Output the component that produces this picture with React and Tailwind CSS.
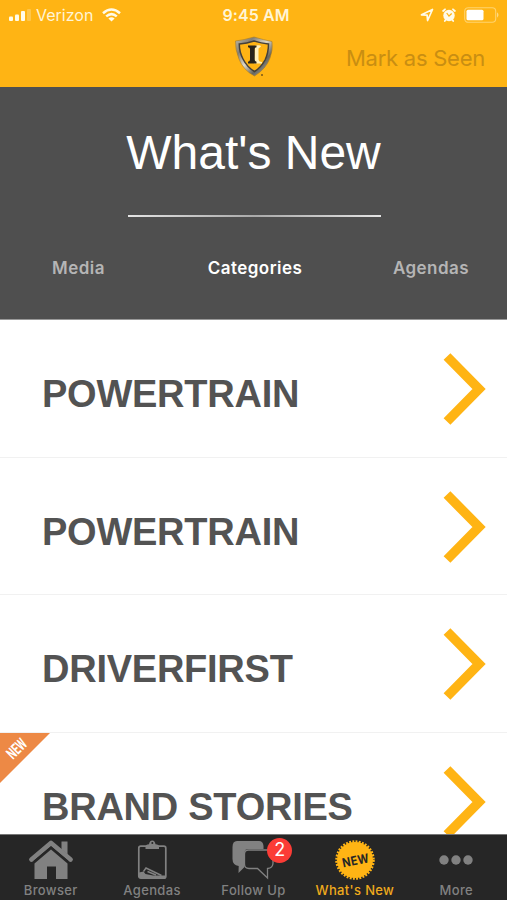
import React from "react";

const categories = [
  { title: "POWERTRAIN" },
  { title: "POWERTRAIN" },
  { title: "DRIVERFIRST" },
  { title: "BRAND STORIES", isNew: true },
];

function StatusBar() {
  return (
    <div className="grid h-[30px] grid-cols-3 items-center text-[#fff5d6]">
      <div className="flex items-center pl-[9px]">
        <svg width="23" height="14" viewBox="0 0 23 14" fill="#fffbe9">
          <rect x="0" y="8.5" width="4" height="4.5" rx="1" />
          <rect x="6" y="6.5" width="4" height="6.5" rx="1" />
          <rect x="12" y="3" width="4" height="10" rx="1" />
          <rect x="18" y="1" width="4" height="12" rx="1" opacity="0.25" />
        </svg>
        <span className="ml-[4px] text-[16px] leading-[20px]">Verizon</span>
        <svg className="ml-[9px]" width="19" height="14" viewBox="0 0 19 14" fill="none" stroke="#fffbe9" strokeWidth="2.5">
          <path d="M1 5.2Q9.500-2.2 18 5.200" />
          <path d="M4.200 8.400Q9.500 3.800 14.800 8.400" />
          <path d="M9.500 13.500L6.400 10.400Q9.500 8 12.600 10.400Z" fill="#fffbe9" stroke="none" />
        </svg>
      </div>
      <div className="pl-[5px] text-center text-[16px] font-semibold leading-[20px] tracking-[0.1px]">9:45 AM</div>
      <div className="flex items-center justify-end pr-[7px]">
        <svg width="14" height="14" viewBox="0 0 14 14" fill="none" stroke="#fffbe9" strokeWidth="1.7" strokeLinejoin="round">
          <path d="M1.500 6.800L12.500 1.500L7.600 12.500L7.100 7.200Z" />
        </svg>
        <svg className="ml-[8px]" width="14" height="14" viewBox="0 0 14 14">
          <circle cx="7" cy="7.500" r="5.700" fill="#fffbe9" />
          <path d="M1.100 3L3 1.300M11 1.300L12.900 3M3.500 12L2.800 13M10.500 12L11.200 13" stroke="#fffbe9" strokeWidth="1.800" strokeLinecap="round" />
          <path d="M4.700 5L7 8L9.700 5.500" fill="none" stroke="#ffb414" strokeWidth="1.200" />
        </svg>
        <svg className="ml-[8px]" width="36" height="16" viewBox="0 0 36 16">
          <rect x=".7" y=".7" width="31" height="14.600" rx="3.500" fill="none" stroke="#ffd36e" strokeWidth="1.100" />
          <rect x="2.500" y="2.700" width="17" height="10.600" rx="1.500" fill="#fff" />
          <path d="M33 5.300Q36 8 33 10.700Z" fill="#ffd982" />
        </svg>
      </div>
    </div>
  );
}

function Shield() {
  return (
    <svg width="40" height="42" viewBox="0 0 40 42">
      <defs>
        <linearGradient id="steel" x1="0" y1="0" x2="1" y2="1">
          <stop stopColor="#c5bda6" />
          <stop offset=".25" stopColor="#827f78" />
          <stop offset=".48" stopColor="#ded8c8" />
          <stop offset=".7" stopColor="#68665f" />
          <stop offset="1" stopColor="#c4c4bd" />
        </linearGradient>
      </defs>
      <path d="M1.500 5Q10 4 20 1Q30 4 38 5.500Q39.200 14 36 22Q32 33 20.500 40Q9 34 5 23Q1 13 1.500 5Z" fill="url(#steel)" stroke="#a57b28" strokeWidth=".6" />
      <path d="M5.300 8Q13 7.300 20 5Q27 7.300 34.500 8Q34.500 17 31 24Q27 31.500 20.500 35.500Q13 31 9 23Q5.300 16 5.300 8Z" fill="#ffb414" stroke="#454039" strokeWidth="1.500" />
      <path d="M21 9.500Q27 8.500 27 10.500L24.500 12.500V23.500Q25 26 28 26V27.500H20Z" fill="#fff0bd" />
      <path d="M14 9.500H22.500V11.200Q20.700 11.500 20.700 13V23.500Q20.700 25.500 22.500 25.800V27.500H14V25.800Q16 25.500 16 23.500V13Q16 11.500 14 11.200Z" fill="#28231b" />
      <circle cx="28" cy="39" r="1" fill="#785719" />
    </svg>
  );
}

function Row({ title, isNew }) {
  return (
    <div className="relative flex h-[137.5px] shrink-0 items-center justify-between border-b border-[#f1f1f1] pl-[42px] pr-[21px]">
      {isNew && (
        <div className="absolute left-0 top-0 h-[50px] w-[50px]">
          <svg width="50" height="50" viewBox="0 0 50 50">
            <path d="M0 0H50L0 50Z" fill="#ed8945" />
          </svg>
          <span className="absolute left-[1px] top-[6px] flex h-[20px] w-[32px] -rotate-45 scale-x-[0.62] items-center justify-center font-['Roboto'] text-[16px] font-bold leading-[20px] text-white">NEW</span>
        </div>
      )}
      <span className="pt-[12px] font-['Liberation_Sans',sans-serif] text-[38px] font-bold leading-[44px] tracking-[-0.25px] text-[#535353]">{title}</span>
      <svg className="mt-[1.5px]" width="43" height="72" viewBox="0 0 43 72" fill="none" stroke="#ffb414" strokeWidth="9.500">
        <path d="M4 3.500L36 36L4 68.500" />
      </svg>
    </div>
  );
}

function HomeIcon() {
  return (
    <svg width="46" height="42" viewBox="0 0 46 42" fill="#818181">
      <path d="M33.500 2.500H39.500V15.500L33.500 10.400Z" />
      <path d="M3.500 20.500L23 4L42.500 20.500" fill="none" stroke="#818181" strokeWidth="4.800" strokeLinecap="round" strokeLinejoin="round" />
      <path d="M23 10.500L39.500 24.500V40H28V27.500H19V40H6.500V24.500Z" />
      <path d="M6 22.300L23 8L40 22.300" fill="none" stroke="#262626" strokeWidth="1.200" />
    </svg>
  );
}

function ClipboardIcon() {
  return (
    <svg width="32" height="42" viewBox="0 0 32 42">
      <rect x="2.800" y="7.200" width="27" height="32" rx="2" fill="none" stroke="#818181" strokeWidth="1.700" />
      <path d="M9.500 8Q9.500 5.500 13 5.300Q13.500 1.500 16.300 1.500Q19 1.500 19.500 5.300Q23 5.500 23 8V10H9.500Z" fill="#818181" />
      <circle cx="16.300" cy="4" r="1" fill="#262626" />
      <path d="M3 33.500L7.500 32.500L9.500 35L17 36.500H29V39H3Z" fill="#818181" />
      <path d="M7.500 32.500L10 29L25.500 36.500M11.500 32.500L20 36" fill="none" stroke="#818181" strokeWidth="1.400" />
    </svg>
  );
}

function ChatIcon() {
  return (
    <svg width="44" height="42" viewBox="0 0 44 42">
      <path d="M6 2H28Q32 2 32.500 7V10H17Q13.500 10 13.500 14V28L7.500 34L7.700 27Q1.500 26 1.500 20V8Q1.500 2 6 2Z" fill="#818181" />
      <path d="M17.500 11H39Q42 11 42 15V24Q42 29 36.500 29.500V39L26.500 29.500H18Q13.500 29.500 13.500 25V15Q13.500 11 17.500 11Z" fill="#262626" stroke="#818181" strokeWidth="1.300" />
    </svg>
  );
}

function NewIcon() {
  return (
    <svg width="42" height="42" viewBox="0 0 42 42">
      <circle cx="21" cy="21" r="18" fill="#ffb414" />
      <circle cx="21" cy="21" r="18.500" fill="none" stroke="#ffb414" strokeWidth="2.500" strokeDasharray="1.900 1.329" />
      <text x="21.500" y="26" transform="rotate(-12 21 21)" textAnchor="middle" textLength="27" lengthAdjust="spacingAndGlyphs" className="fill-[#262626] text-[12.5px] font-bold">NEW</text>
    </svg>
  );
}

function MoreIcon() {
  return (
    <svg width="34" height="42" viewBox="0 0 34 42" fill="#818181">
      <circle cx="5" cy="21" r="4.700" />
      <circle cx="17" cy="21" r="4.700" />
      <circle cx="29" cy="21" r="4.700" />
    </svg>
  );
}

const navigation = [
  { name: "Browser", icon: <HomeIcon /> },
  { name: "Agendas", icon: <ClipboardIcon /> },
  { name: "Follow Up", icon: <ChatIcon />, count: 2 },
  { name: "What's New", icon: <NewIcon />, active: true },
  { name: "More", icon: <MoreIcon /> },
];

export default function App() {
  return (
    <div className="flex h-[900px] w-[507px] flex-col overflow-hidden bg-white font-['Inter','Liberation_Sans',sans-serif]">
      <header className="h-[87px] shrink-0 bg-[#ffb414]">
        <StatusBar />
        <div className="grid h-[57px] grid-cols-[1fr_40px_1fr] pl-[22px] pr-[22px]">
          <span />
          <div className="pt-[6px]"><Shield /></div>
          <span className="whitespace-nowrap pt-[14px] text-right text-[22px] leading-[28px] tracking-[-0.25px] text-[#c98e12]">Mark as Seen</span>
        </div>
      </header>
      <section className="flex h-[233px] shrink-0 flex-col items-center border-b border-[#999] bg-[#4f4f4f]">
        <h1 className="mt-[38px] font-['Liberation_Sans',sans-serif] text-[48px] leading-[56px] text-white">What's New</h1>
        <div className="ml-px mt-[33.5px] h-[2px] w-[253px] bg-gradient-to-r from-[#e4e4e4] via-[#aaa] to-[#e4e4e4]" />
        <nav className="mt-[39px] grid w-full grid-cols-[155px_198px_154px] pl-px text-center text-[17px] font-semibold leading-[24px] tracking-[0.45px] text-[#b5b5b5]">
          <span>Media</span>
          <span className="text-white">Categories</span>
          <span>Agendas</span>
        </nav>
      </section>
      <main className="h-[513.5px] shrink-0 overflow-hidden">
        {categories.map((category, index) => <Row key={index} {...category} />)}
      </main>
      <nav className="grid h-[66.5px] shrink-0 grid-cols-5 border-t border-[#777] bg-[#262626]">
        {navigation.map((item) => (
          <div key={item.name} className={`flex flex-col items-center pt-[4px] text-[13px] font-medium leading-[18px] tracking-[0.35px] ${item.active ? "text-[#efaa1d]" : "text-[#818181]"}`}>
            <div className="relative h-[42px]">
              {item.icon}
              {item.count && <span className="absolute -right-[17px] -top-[1px] flex h-[25px] w-[25px] items-center justify-center rounded-full bg-[#fb3c36] text-[18px] font-normal text-white">{item.count}</span>}
            </div>
            <span className="whitespace-nowrap">{item.name}</span>
          </div>
        ))}
      </nav>
    </div>
  );
}
